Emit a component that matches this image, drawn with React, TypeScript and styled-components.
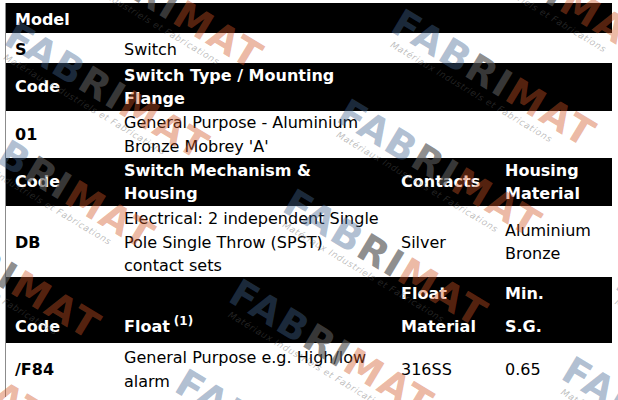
import React from 'react';
import styled, { createGlobalStyle } from 'styled-components';

const GlobalStyle = createGlobalStyle`
  html, body {
    margin: 0;
    padding: 0;
    background: #ffffff;
  }
  body {
    font-family: 'DejaVu Sans', Verdana, sans-serif;
    font-size: 16px;
    color: #000000;
  }
`;

const COLS = '109px 277px 104px 115px';

const Page = styled.div`
  position: relative;
  width: 618px;
  height: 400px;
  overflow: hidden;
  padding: 3px 0 0 5px;
  box-sizing: border-box;
`;

const Table = styled.div`
  display: flex;
  flex-direction: column;
  width: 606px;
  border-left: 1px solid #8c8c8c;
`;

const Row = styled.div<{ $dark?: boolean; $h: number; $lh?: number; $pt?: number }>`
  display: grid;
  grid-template-columns: ${COLS};
  height: ${({ $h }) => $h}px;
  padding-top: ${({ $pt }) => $pt || 0}px;
  box-sizing: border-box;
  line-height: ${({ $lh }) => $lh || 23.5}px;
  background: ${({ $dark }) => ($dark ? '#000000' : '#ffffff')};
  color: ${({ $dark }) => ($dark ? '#ffffff' : '#000000')};
  font-weight: ${({ $dark }) => ($dark ? 700 : 400)};
`;

const CellBox = styled.div<{ $span?: number; $bold?: boolean; $end?: boolean }>`
  grid-column: span ${({ $span }) => $span || 1};
  display: flex;
  align-items: ${({ $end }) => ($end ? 'flex-end' : 'center')};
  padding: 0 10px 0 9px;
  font-weight: ${({ $bold }) => ($bold ? 700 : 'inherit')};
  min-width: 0;
`;

const Sup = styled.sup`
  font-size: 12px;
  line-height: 0;
  vertical-align: 7px;
  margin-left: 4px;
`;

const Overlay = styled.svg`
  position: absolute;
  left: 0;
  top: 0;
  pointer-events: none;
`;

type CellProps = {
  span?: number;
  bold?: boolean;
  end?: boolean;
  children?: React.ReactNode;
};

const Cell = ({ span, bold, end, children }: CellProps) => (
  <CellBox $span={span} $bold={bold} $end={end}>
    <span>{children}</span>
  </CellBox>
);

// logo positions in the rotated frame: columns 325 apart, rows 105 apart
const ANGLE = 31;
const LOGO_U = [-301, 24, 349, 674];
const LOGO_W = [-307, -202, -97, 8, 113, 218, 323];

const cos = Math.cos((ANGLE * Math.PI) / 180);
const sin = Math.sin((ANGLE * Math.PI) / 180);

// keep only the logos that touch the 618x400 picture
const isVisible = (u: number, w: number) => {
  const corners = [
    [u, w],
    [u + 240, w],
    [u, w + 45],
    [u + 240, w + 45],
  ].map(([a, b]) => [a * cos - b * sin, a * sin + b * cos]);
  const xs = corners.map((c) => c[0]);
  const ys = corners.map((c) => c[1]);
  return Math.max(...xs) > 0 && Math.min(...xs) < 618 && Math.max(...ys) > 0 && Math.min(...ys) < 400;
};

const LOGOS = LOGO_U.flatMap((u) => LOGO_W.map((w) => ({ u, w }))).filter((p) => isVisible(p.u, p.w));

const Logo = ({ u, w }: { u: number; w: number }) => (
  <g transform={`translate(${u} ${w})`}>
    <text
      x="0"
      y="28"
      fontFamily="'DejaVu Sans', Verdana, sans-serif"
      fontWeight="700"
      fontSize="38"
      letterSpacing="2"
    >
      <tspan fill="#436691" fillOpacity="0.42">FAB</tspan>
      <tspan fill="#555555" fillOpacity="0.66">RI</tspan>
      <tspan fill="#d15625" fillOpacity="0.43">MAT</tspan>
    </text>
    <text
      x="9"
      y="41"
      fontFamily="'DejaVu Sans', Verdana, sans-serif"
      fontSize="9"
      fontStyle="italic"
      letterSpacing="0.6"
      fill="#5a5a5a"
      fillOpacity="0.4"
    >
      Matériaux Industriels et Fabrications
    </text>
  </g>
);

// the Fabrimat watermark laid diagonally over the whole table
const Watermark = () => (
  <Overlay width="618" height="400" viewBox="0 0 618 400">
    <g transform={`rotate(${ANGLE})`}>
      {LOGOS.map(({ u, w }) => (
        <Logo key={`${u}-${w}`} u={u} w={w} />
      ))}
    </g>
  </Overlay>
);

export default function App() {
  return (
    <>
      <GlobalStyle />
      <Page>
        <Table>
          <Row $dark $h={30} $pt={4}>
            <Cell span={4}>Model</Cell>
          </Row>
          <Row $h={30} $pt={4}>
            <Cell bold>S</Cell>
            <Cell span={3}>Switch</Cell>
          </Row>
          <Row $dark $h={48}>
            <Cell>Code</Cell>
            <Cell>Switch Type / Mounting Flange</Cell>
            <Cell />
            <Cell />
          </Row>
          <Row $h={47}>
            <Cell bold>01</Cell>
            <Cell>General Purpose - Aluminium Bronze Mobrey 'A'</Cell>
            <Cell />
            <Cell />
          </Row>
          <Row $dark $h={48}>
            <Cell>Code</Cell>
            <Cell>Switch Mechanism &amp; Housing</Cell>
            <Cell>Contacts</Cell>
            <Cell>Housing Material</Cell>
          </Row>
          <Row $h={71} $pt={1}>
            <Cell bold>DB</Cell>
            <Cell>Electrical: 2 independent Single Pole Single Throw (SPST) contact sets</Cell>
            <Cell>Silver</Cell>
            <Cell>Aluminium Bronze</Cell>
          </Row>
          <Row $dark $h={66} $lh={33}>
            <Cell end>Code</Cell>
            <Cell end>
              Float<Sup>(1)</Sup>
            </Cell>
            <Cell end>
              Float
              <br />
              Material
            </Cell>
            <Cell end>
              Min.
              <br />
              S.G.
            </Cell>
          </Row>
          <Row $h={54} $lh={24}>
            <Cell bold>/F84</Cell>
            <Cell>General Purpose e.g. High/low alarm</Cell>
            <Cell>316SS</Cell>
            <Cell>0.65</Cell>
          </Row>
        </Table>
        <Watermark />
      </Page>
    </>
  );
}
